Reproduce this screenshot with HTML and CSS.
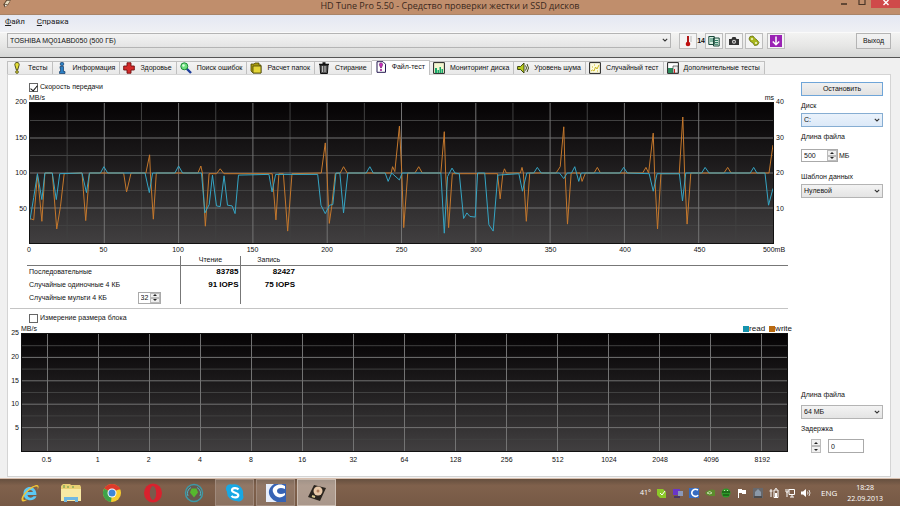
FILE: index.html
```html
<!DOCTYPE html>
<html lang="ru">
<head>
    <meta charset="UTF-8">
    <meta name="viewport" content="width=device-width, initial-scale=1.0">
    <title>HD Tune Pro 5.50</title>
    <link rel="stylesheet" href="styles.css">
</head>
<body>

    <header class="titlebar">
        <svg class="app-icon" viewBox="0 0 12 12"><path d="M1 6 5 0h6L8 6 3 10z" fill="#5b4630"/><path d="M3 5 6 1l4 0-3 5z" fill="#e8dcc0"/><path d="M3 6l3 1-2 2z" fill="#fff"/></svg>
        <h1>HD Tune Pro 5.50 - Средство проверки жестки и SSD дисков</h1>
        <div class="window-buttons">
            <button aria-label="Свернуть"><svg viewBox="0 0 8 8"><path d="M1 4h6" stroke="#4a3628" stroke-width="1.6"/></svg></button>
            <button aria-label="Развернуть"><svg viewBox="0 0 8 8"><path d="M1 0v4.500h6V0" fill="none" stroke="#4a3628" stroke-width="1.2"/></svg></button>
            <button class="close" aria-label="Закрыть"><svg viewBox="0 0 8 8"><path d="M1.500 0l5 5M6.500 0l-5 5" stroke="#fff" stroke-width="1.400"/></svg></button>
        </div>
    </header>

    <nav class="menubar">
        <a href="#"><u>Ф</u>айл</a>
        <a href="#"><u>С</u>правка</a>
    </nav>

    <div class="toolbar">
        <div class="select drive">
            <select aria-label="Накопитель"><option>TOSHIBA MQ01ABD050 (500 ГБ)</option></select>
            <svg viewBox="0 0 6 4"><path d="M.8.8 3 3 5.200.8" fill="none" stroke="#333" stroke-width="1.100"/></svg>
        </div>
        <div class="tools">
            <button aria-label="Температура"><svg viewBox="0 0 12 12"><path d="M5 1h2v6h-2z" fill="#b01818"/><circle cx="6" cy="9" r="2.300" fill="#c01010"/><path d="M8 2h2M8 4h2M8 6h2" stroke="#999" stroke-width=".6"/></svg></button>
            <span class="temp">14</span>
            <button aria-label="Копировать"><svg viewBox="0 0 12 12"><path d="M.8 1.500h5.500v8H.8zM5.500 3h5.700v8H5.500z" fill="#d9efe3" stroke="#1c4a3c"/><path d="M2 4h3M2 6h3M7 5.500h3M7 7.500h3M7 9.300h3" stroke="#2c7a60"/></svg></button>
            <button aria-label="Снимок"><svg viewBox="0 0 12 12"><path d="M1 4h2.500l1-2h3l1 2H11v6H1z" fill="#333"/><circle cx="6" cy="6.800" r="2" fill="#ddd"/><circle cx="6" cy="6.800" r="1" fill="#444"/></svg></button>
            <button aria-label="Параметры"><svg viewBox="0 0 12 12"><path d="M2 1.500l3-.5 1.500 2L9 5l2 2.500L9.500 10l-3 .5L5 8 2.500 6.500 1 4z" fill="#a9b81c" stroke="#5e6a08" stroke-width=".8"/><circle cx="4" cy="4" r="1" fill="#f4f4d0"/><circle cx="8" cy="8" r="1" fill="#f4f4d0"/></svg></button>
            <button class="save" aria-label="Сохранить"><svg viewBox="0 0 12 12"><path d="M0 0h12v12H0z" fill="#9a22b4"/><path d="M6 1.500v8M2.800 6.500 6 9.700l3.200-3.200" fill="none" stroke="#fff" stroke-width="1.500"/></svg></button>
        </div>
        <button class="exit">Выход</button>
    </div>

    <main>
        <div class="tabs" role="tablist">
            <button role="tab"><svg viewBox="0 0 10 12"><path d="M5 .5c2 0 2.500 1.500 2 3L5.600 8H4.400L3 3.500c-.5-1.500 0-3 2-3z" fill="#e6e03a" stroke="#3c3c10" stroke-width=".9"/><circle cx="5" cy="10" r="1.400" fill="#d8d030" stroke="#3c3c10" stroke-width=".7"/></svg>Тесты</button>
            <button role="tab"><svg viewBox="0 0 10 12"><circle cx="5" cy="2" r="1.800" fill="#2a7fc4" stroke="#123a66" stroke-width=".7"/><path d="M3 4.500h3.500v5H8V11.500H2.500v-2h1V6.500H3z" fill="#2a7fc4" stroke="#123a66" stroke-width=".7"/></svg>Информация</button>
            <button role="tab"><svg viewBox="0 0 12 12"><path d="M4 .8h4V4h3.300v4H8v3.200H4V8H.7V4H4z" fill="#d42a2a" stroke="#701010" stroke-width=".9"/></svg>Здоровье</button>
            <button role="tab"><svg viewBox="0 0 12 12"><path d="M6.500 6.500 11 11" stroke="#1c3c9c" stroke-width="2.400"/><circle cx="4.300" cy="4.300" r="3.500" fill="#6fe080" stroke="#1f8a3a"/><circle cx="3.500" cy="3.500" r="1.200" fill="#dfffe0"/></svg>Поиск ошибок</button>
            <button role="tab"><svg viewBox="0 0 12 12"><path d="M1 2h3l1-1h4v2h2v8H3L1 9z" fill="#a89a10" stroke="#4c4606" stroke-width=".8"/><path d="M3 4h8v7H3z" fill="#e4d638" stroke="#4c4606" stroke-width=".8"/></svg>Расчет папок</button>
            <button role="tab"><svg viewBox="0 0 12 12"><path d="M2 3h8l-.6 8.500H2.600z" fill="#555" stroke="#111"/><path d="M1 2.300h10M4.500 1h3" stroke="#111" stroke-width="1.300"/><path d="M4.500 4v6M7 4v6" stroke="#ccc" stroke-width=".9"/></svg>Стирание</button>
            <button role="tab" class="active" aria-selected="true"><svg viewBox="0 0 12 12"><path d="M2 .7h6l2.500 2.500v8.100H2z" fill="#fff" stroke="#251a50"/><path d="M6 2c1.500 0 1.800 1 1.500 2L6.300 7h-.6L4.500 4C4.200 3 4.500 2 6 2z" fill="#d030c0" stroke="#601060" stroke-width=".6"/><circle cx="6" cy="9" r="1.100" fill="#a02090"/></svg>Файл-тест</button>
            <button role="tab"><svg viewBox="0 0 12 12"><path d="M.6.6h10.800v10.800H.6z" fill="#f4f7d0" stroke="#222"/><path d="M2 11V6h2v5zM4.500 11V8h1.500v3zM6.500 11V5H8v6zM8.500 11V7H10v4z" fill="#18a868"/></svg>Мониторинг диска</button>
            <button role="tab"><svg viewBox="0 0 12 12"><path d="M.6 4.500h2.900L7 1v10L3.500 7.500H.6z" fill="#b9cc20" stroke="#2f3806" stroke-width=".9"/><path d="M8.500 3.500q2 2.500 0 5M10 2q3 4 0 8" fill="none" stroke="#2f3806" stroke-width=".9"/></svg>Уровень шума</button>
            <button role="tab"><svg viewBox="0 0 12 12"><path d="M.6.6h10.800v10.800H.6z" fill="#fdfbe0" stroke="#222"/><path d="M2 9l1.500-1L5 9l1.500-4L8 7l2-4" fill="none" stroke="#cbb820"/><path d="M3 5h1M5 3h1M8 9h1" stroke="#cbb820"/></svg>Случайный тест</button>
            <button role="tab"><svg viewBox="0 0 12 12"><path d="M.6.6h10.800v10.800H.6z" fill="#fff" stroke="#222"/><path d="M1 6h5v5H1z" fill="#2d8a5c"/><path d="M6 4h5v7H6z" fill="#eee" stroke="#444" stroke-width=".7"/><path d="M7.500 7v4" stroke="#c22"/></svg>Дополнительные тесты</button>
        </div>

        <section class="panel">
            <div class="row">
                <div class="content transfer">
                    <label class="check"><input type="checkbox" checked>Скорость передачи</label>
                    <div class="units"><span>MB/s</span><span>ms</span></div>
                    <div class="chart">
                        <div class="y-axis"><span>200</span><span>150</span><span>100</span><span>50</span><span></span></div>
                        <svg class="plot" viewBox="0 0 500 200" preserveAspectRatio="none">
                            <g class="minor"><path d="M25 0V200M75 0V200M125 0V200M175 0V200M225 0V200M275 0V200M325 0V200M375 0V200M425 0V200M475 0V200M0 25H500M0 75H500M0 125H500M0 175H500"/></g>
                            <g class="major"><path d="M50 0V200M100 0V200M150 0V200M200 0V200M250 0V200M300 0V200M350 0V200M400 0V200M450 0V200M0 50H500M0 100H500M0 150H500"/></g>
                            <polyline class="write" points="0,165 2.500,167 5,103 8,169 10,100 15,100 18,180 20.500,148 23,101 35,100 37.500,168 40,100 63,100 65,127 68,100 78,100 80.500,74 81,100 83,166 85,100 113,100 115,90 116,100 118,176 120.500,101 125.500,101 128,94 130.500,101 163,101 165.500,167 167.500,101 170.500,101 173.400,183 176.300,101 196,100 198.700,57 199.800,98 201.400,172 203,148 205.400,101 208.800,100 211,91 213.500,100 243,100 244,91 245.500,98 248.600,33 250.200,100 251.500,178 254.200,100 259,100 261.600,91 264,100 276.500,100 278.800,41 279.700,100 281.700,178 284.200,101 314.600,101 316.400,137 318.200,101 319.300,94 320.600,100 330,100 331.100,92 332,100 334,169 336.300,100 354,100 356.800,91 359.200,34 360.100,100 361.700,173 364.200,100 370.200,100 371.500,112 373.800,100 379.600,100 381.800,92 383.900,100 412.300,100 414.500,92 416.300,100 419.400,43 420.300,100 422.300,180 424.600,101 436.900,101 439.300,20 440.500,100 442.200,173 444.700,100 467,100 469.500,92 471.800,100 497.300,100 500,60"/>
                            <polyline class="read" points="0,167 2.500,135 5,101 8,138 10,100 15,100 17.700,138 20,101 35,100 38,128 40,100 47.400,100 49.700,91 52.300,100 77.400,100 80.300,128 82.500,100 97.500,100 100,90 102.700,100 115.400,100 117.700,157 120.600,145 122.800,103 125.500,147 128,148 130.600,104 132.900,146 136,147 138,158 140.300,103 160.800,102 162.900,127 165.300,102 193.600,102 195.800,146 198.700,158 201.600,146 203.800,145 205.900,100 208.500,100 211,157 213.900,100 226.200,100 228.700,91 231,100 239,100 241,112 243.400,100 248.600,110 250.400,100 276.500,100 278.800,186 281,105 284,93 286,100 288.900,101 291.800,165 294,157 296,162 299.600,163 301.200,100 306,100 308.800,174 311.700,183 314.800,103 329,101 331.400,126 334.300,100 339,100 341.400,92 344,100 356.300,100 359.200,108 361.500,100 364.400,100 366.600,91 369.300,112 371,100 397,100 399.500,92 402,100 416.700,101 419.400,126 422,101 437,101 439.100,140 441.300,100 452,100 454.300,92 457,100 484.700,100 487,92 489.200,100 494.600,100 497,146 500,122"/>
                        </svg>
                        <div class="y-axis right"><span>40</span><span>30</span><span>20</span><span>10</span><span></span></div>
                    </div>
                    <div class="x-axis ends"><span>0</span><span>50</span><span>100</span><span>150</span><span>200</span><span>250</span><span>300</span><span>350</span><span>400</span><span>450</span><span>500mB</span></div>

                    <table class="results">
                        <thead>
                            <tr><th></th><th>Чтение</th><th>Запись</th><th></th></tr>
                        </thead>
                        <tbody>
                            <tr><td>Последовательные</td><td>83785</td><td>82427</td><td></td></tr>
                            <tr><td>Случайные одиночные 4 КБ</td><td>91 IOPS</td><td>75 IOPS</td><td></td></tr>
                            <tr>
                                <td>
                                    <div class="multi">
                                        <label for="threads">Случайные мульти 4 КБ</label>
                                        <div class="spin threads"><input type="text" id="threads" value="32"><span class="arrows"><button aria-label="Больше"></button><button aria-label="Меньше"></button></span></div>
                                    </div>
                                </td>
                                <td></td><td></td><td></td>
                            </tr>
                        </tbody>
                    </table>
                </div>

                <aside>
                    <button class="stop">Остановить</button>
                    <label for="disk">Диск</label>
                    <div class="select blue">
                        <select id="disk"><option>C:</option></select>
                        <svg viewBox="0 0 6 4"><path d="M.8.8 3 3 5.200.8" fill="none" stroke="#333" stroke-width="1.100"/></svg>
                    </div>
                    <label for="length">Длина файла</label>
                    <div class="length">
                        <div class="spin"><input type="text" id="length" value="500"><span class="arrows"><button aria-label="Больше"></button><button aria-label="Меньше"></button></span></div>
                        <span>МБ</span>
                    </div>
                    <label for="pattern">Шаблон данных</label>
                    <div class="select">
                        <select id="pattern"><option>Нулевой</option></select>
                        <svg viewBox="0 0 6 4"><path d="M.8.8 3 3 5.200.8" fill="none" stroke="#333" stroke-width="1.100"/></svg>
                    </div>
                </aside>
            </div>

            <div class="row lower">
                <div class="content block">
                    <label class="check"><input type="checkbox">Измерение размера блока</label>
                    <div class="units">
                        <span>MB/s</span>
                        <span class="legend"><i class="key-read"></i>read<i class="key-write"></i>write</span>
                    </div>
                    <div class="chart">
                        <div class="y-axis"><span>25</span><span>20</span><span>15</span><span>10</span><span>5</span><span></span></div>
                        <svg class="plot" viewBox="0 0 300 100" preserveAspectRatio="none">
                            <g class="minor"><path d="M0 10H300M0 30H300M0 50H300M0 70H300M0 90H300"/></g>
                            <g class="major"><path d="M10 0V100M30 0V100M50 0V100M70 0V100M90 0V100M110 0V100M130 0V100M150 0V100M170 0V100M190 0V100M210 0V100M230 0V100M250 0V100M270 0V100M290 0V100M0 20H300M0 40H300M0 60H300M0 80H300"/></g>
                        </svg>
                    </div>
                    <div class="x-axis"><span>0.5</span><span>1</span><span>2</span><span>4</span><span>8</span><span>16</span><span>32</span><span>64</span><span>128</span><span>256</span><span>512</span><span>1024</span><span>2048</span><span>4096</span><span>8192</span></div>
                </div>

                <aside>
                    <label for="block-length">Длина файла</label>
                    <div class="select">
                        <select id="block-length"><option>64 МБ</option></select>
                        <svg viewBox="0 0 6 4"><path d="M.8.8 3 3 5.200.8" fill="none" stroke="#333" stroke-width="1.100"/></svg>
                    </div>
                    <label for="delay">Задержка</label>
                    <div class="delay">
                        <span class="arrows"><button aria-label="Больше"></button><button aria-label="Меньше"></button></span>
                        <input type="text" id="delay" value="0">
                    </div>
                </aside>
            </div>
        </section>
    </main>

    <footer class="taskbar">
        <div class="apps">
            <button aria-label="Internet Explorer"><svg viewBox="0 0 20 20"><path d="M16.500 12H7.500c.3 3 4.500 3.500 6 1.300h3C14.800 19 3.500 19 3.500 10.500S16.500 1.500 16.500 12zM7.600 9h5.300c-.3-2.700-5-2.700-5.300 0z" fill="#5cc8f4"/><path d="M2 18C-1 14 11 2 17 2c3 .5 1 4 .5 5 .5-2 .5-3.500-1-3.500C12 3.500 2 13 3.500 16.500c.8 1 3 0 4 0C6 17.500 3.500 19.500 2 18z" fill="#f4c534"/></svg></button>
            <button aria-label="Проводник"><svg viewBox="0 0 20 20"><path d="M0 3l2-2h7l1 1h9l1 2v14H0z" fill="#e9cf74"/><path d="M0 6h20v12H0z" fill="#f8e9a4"/><path d="M3 2v3M7 3v2M12 3v2" stroke="#5a9a4a"/><path d="M3 19v-5h14v5h-3v-2H6v2z" fill="#6fb8e2"/></svg></button>
            <button aria-label="Chrome"><svg viewBox="0 0 20 20"><circle cx="10" cy="10" r="9" fill="#f6cc30"/><path d="M10 10 2.200 5.500A9 9 0 0 1 17.800 5.500z" fill="#dc3a2c"/><path d="M10 10 2.200 5.500A9 9 0 0 0 9 19z" fill="#3fa24a"/><path d="M10 5.500h8" stroke="#dc3a2c" stroke-width="2"/><circle cx="10" cy="10" r="4.500" fill="#fff"/><circle cx="10" cy="10" r="3.500" fill="#3f86d8"/></svg></button>
            <button aria-label="Opera"><svg viewBox="0 0 20 20"><ellipse cx="10" cy="10" rx="9" ry="9.500" fill="#d8222e"/><ellipse cx="10" cy="10" rx="3.200" ry="7" fill="#7a5a4c"/></svg></button>
            <button aria-label="Загрузки"><svg viewBox="0 0 20 20"><circle cx="10" cy="10" r="8.500" fill="#66584e" stroke="#3d99a6" stroke-width="1.500"/><path d="M4 13A6.500 6.500 0 0 1 7 4.500M16 13A6.500 6.500 0 0 0 13 4.500" fill="none" stroke="#52b4c4"/><path d="M7.500 5.500h5l1.500 4-4 5-4-5z" fill="#56b82e"/></svg></button>
            <button class="open" aria-label="Skype"><svg viewBox="0 0 20 20"><path d="M1 5a4.500 4.500 0 0 1 6-3.500A9 9 0 0 1 18 12a4.500 4.500 0 0 1-6 6A9 9 0 0 1 2 8.500 4 4 0 0 1 1 5z" fill="#18a8e4"/><path d="M13.500 6.500C12 4.500 7 4.500 7 7.300c0 3 6.300 2 6.300 5 0 2.600-5 2.900-6.800.5" fill="none" stroke="#fff" stroke-width="2.200"/></svg></button>
            <button class="open" aria-label="CCleaner"><svg viewBox="0 0 20 20"><path d="M0 1h20v18H0z" fill="#3763b4"/><path d="M0 1h8C-1 7 3 16 11 19H0z" fill="#e7eefb"/><path d="M19 3C14-1 5 3 7 9s8 7 12 3v-2c-4 2-8 1-8-2s4-4 8-2z" fill="#fff"/></svg></button>
            <button class="open current" aria-label="HD Tune"><svg viewBox="0 0 20 20"><path d="M7 2l12 3-6 13L1 14z" fill="#2a241e"/><circle cx="11" cy="8" r="4.500" fill="#e8c8a8"/><circle cx="11" cy="8" r="1.500" fill="#b08060"/><path d="M5 13l3 1" stroke="#d8c890" stroke-width="2"/></svg></button>
        </div>
        <div class="tray">
            <span>41°</span>
            <svg viewBox="0 0 10 10"><path d="M0 1h6l3 3v6H3L0 7z" fill="#8cc828"/><path d="M3 5l2 2 3-4" fill="none" stroke="#fff"/></svg>
            <svg viewBox="0 0 10 10"><path d="M0 1h7v6H0z" fill="#6a35c8"/><path d="M5 3h5v5H5z" fill="#8a98b8"/><path d="M1 9h6" stroke="#3a2a70" stroke-width="1.500"/></svg>
            <svg viewBox="0 0 10 10"><path d="M0 0h10v10H0z" fill="#376cc0"/><path d="M9 2C5 0 2 3 3 6s5 3 6 1" fill="none" stroke="#fff" stroke-width="1.600"/></svg>
            <svg viewBox="0 0 10 10"><path d="M0 5q4-5 10-3v6H5q-3 0-5-3z" fill="#5c8c2c"/><path d="M2 5q3-3 5 0-2 2-5 0" fill="none" stroke="#c4d8a8"/></svg>
            <svg viewBox="0 0 10 10"><circle cx="5" cy="5" r="4.500" fill="#2d9a28"/><path d="M1 4h8M2 7h6" stroke="#12400f"/><path d="M3 2l1 1M7 2 6 3" stroke="#bfe8b0"/></svg>
            <svg viewBox="0 0 10 10"><path d="M1.500 1v9" stroke="#fff"/><path d="M2 1h3v1h4v4H5V5H2z" fill="#fff"/></svg>
            <svg viewBox="0 0 10 10"><path d="M0 0h10v10H0z" fill="#67686c"/><path d="M2 8V4l3-3 3 3v4z" fill="#8b99a8"/><path d="M1 9h8" stroke="#333"/></svg>
            <svg viewBox="0 0 10 10"><path d="M5 2h4v7.500H5zM6 .8h2" fill="none" stroke="#fff"/><path d="M6 5h2v4H6z" fill="#fff"/><path d="M2 1v8M.5 3h3" stroke="#fff"/></svg>
            <svg viewBox="0 0 10 10"><path d="M4 1.500h5.500v5H4zM5 9h4M7 7v2M1 1v3h2V1M2 4v5" fill="none" stroke="#fff"/></svg>
            <svg viewBox="0 0 10 10"><path d="M0 3.500h2L5 1v8L2 6.500H0z" fill="#fff"/><path d="M6.500 3.500q1 1.500 0 3M8 2q2 3 0 6" fill="none" stroke="#fff" stroke-width=".8"/></svg>
            <span class="lang">ENG</span>
            <time class="clock">18:28<br>22.09.2013</time>
        </div>
    </footer>

</body>
</html>
```
FILE: styles.css
```css
* {
    box-sizing: border-box;
}

body {
    margin: 0;
    min-height: 100vh;
    display: flex;
    flex-direction: column;
    background-color: #f0f0f0;
    color: #111;
    font-family: "Liberation Sans", Arial, sans-serif;
    font-size: 7px;
    line-height: 10px;
}

button,
input,
select {
    font: inherit;
    color: inherit;
    margin: 0;
    padding: 0;
    border-radius: 0;
}

svg {
    display: block;
    flex: none;
}

/* window frame */
.titlebar {
    display: flex;
    align-items: flex-start;
    height: 15px;
    padding-left: 2px;
    background-color: #c08e6c;
    border-bottom: 1px solid #a98468;
}

.app-icon {
    width: 10px;
    height: 9px;
}

.titlebar h1 {
    flex: 1;
    margin: 0;
    padding-left: 53px;
    font-family: "Open Sans", "Noto Sans", sans-serif;
    font-size: 9px;
    font-weight: normal;
    line-height: 11px;
    text-align: center;
    color: #3a281c;
}

.window-buttons {
    display: flex;
}

.window-buttons button {
    display: flex;
    justify-content: center;
    width: 18px;
    height: 8px;
    border: 0;
    background: none;
}

.window-buttons svg {
    width: 8px;
    height: 8px;
}

.window-buttons .close {
    width: 29px;
    background-color: #cf4a4a;
}

.menubar {
    display: flex;
    gap: 12px;
    height: 18px;
    padding: 2px 5px;
    background: linear-gradient(#e4e8f3, #eff0f4);
    border-bottom: 1px solid #fafafa;
    font-family: Roboto, "Open Sans", sans-serif;
    font-size: 8px;
}

.menubar a {
    color: #222;
    text-decoration: none;
}

.toolbar {
    display: flex;
    align-items: flex-start;
    height: 25px;
    padding: 0 9px 0 7px;
    background: linear-gradient(#f3f3f2, #e6e6e5 55%, #d6d7d6);
    border-bottom: 1px solid #555;
}

.select {
    position: relative;
}

.select select {
    display: block;
    width: 100%;
    height: 14px;
    padding: 0 2px;
    appearance: none;
    border: 1px solid #b4b4b4;
    background: linear-gradient(#f3f3f3, #e4e4e4);
}

.select svg {
    position: absolute;
    right: 3px;
    top: 5px;
    width: 6px;
    height: 4px;
    pointer-events: none;
}

.select.blue select {
    border-color: #86add2;
    background: linear-gradient(#eaf2fb, #dce9f8);
}

.drive {
    flex: 1;
}

.drive select {
    height: 15px;
}

.tools {
    display: flex;
    align-items: center;
    gap: 2px;
    margin-left: 8px;
}

.tools button {
    display: flex;
    align-items: center;
    justify-content: center;
    width: 18px;
    height: 16px;
    border: 1px solid #bdbdbd;
    background-color: #f4f4f4;
}

.tools svg {
    width: 12px;
    height: 12px;
}

.tools .save {
    margin-left: 2px;
}

.temp {
    margin: 0 -2px;
    font-weight: bold;
}

.exit {
    width: 35px;
    height: 16px;
    margin-left: 71px;
    border: 1px solid #b4b4b4;
    background: linear-gradient(#f2f2f2, #e8e8e8);
}

/* tabs */
main {
    flex: 1;
    display: flex;
    flex-direction: column;
    padding: 2px 9px 1px 7px;
    border-bottom: 1px solid #d8bfae;
}

.tabs {
    display: flex;
    align-items: flex-end;
    height: 14px;
}

.tabs button {
    display: flex;
    align-items: center;
    gap: 5px;
    height: 13px;
    padding: 0 4px 0 3px;
    border: 1px solid #c0c0c0;
    border-left: 0;
    border-bottom: 0;
    background: linear-gradient(#f4f4f4, #e8e8e8);
    white-space: nowrap;
}

.tabs button:first-child {
    border-left: 1px solid #c0c0c0;
}

.tabs svg {
    width: 12px;
    height: 12px;
}

.tabs .active {
    height: 15px;
    margin-bottom: -1px;
    padding-bottom: 3px;
    background: #fff;
    z-index: 1;
}

.panel {
    flex: 1;
    display: flex;
    flex-direction: column;
    border: 1px solid #d4d4d4;
    background-color: #fff;
}

.row {
    display: flex;
    padding: 7px 7px 0 2px;
}

.content {
    flex: 1;
    min-width: 0;
}

.check {
    display: flex;
    align-items: center;
    gap: 2px;
    height: 10px;
}

.check input {
    width: 9px;
    height: 9px;
    appearance: none;
    border: 1px solid #666;
    background-color: #fff;
}

.check input:checked::after {
    content: "";
    display: block;
    width: 3px;
    height: 6px;
    margin: 0 0 0 2px;
    border: solid #111;
    border-width: 0 1px 1px 0;
    transform: rotate(40deg);
}

/* charts */
.units {
    display: flex;
    justify-content: space-between;
    line-height: 8px;
}

.chart {
    display: flex;
}

.plot {
    flex: 1;
    min-width: 0;
    background: linear-gradient(#050304, #1b191a 40%, #413f40);
    border: 1px solid #111;
}

.plot path,
.plot polyline {
    fill: none;
    vector-effect: non-scaling-stroke;
}

.minor {
    stroke: #414141;
}

.major {
    stroke: #737373;
}

.read {
    stroke: #35a5c4;
}

.write {
    stroke: #c5782c;
}

.y-axis {
    display: flex;
    flex-direction: column;
    justify-content: space-between;
}

.y-axis span {
    display: flex;
    align-items: center;
    justify-content: flex-end;
    height: 0;
}

.y-axis.right span {
    justify-content: flex-start;
}

.x-axis {
    display: flex;
    justify-content: space-around;
}

.x-axis span {
    display: flex;
    justify-content: center;
    width: 0;
}

.x-axis.ends {
    justify-content: space-between;
}

.transfer .check,
.block .check {
    padding-left: 19px;
}

.transfer .units {
    padding: 2px 14px 0 19px;
}

.transfer .y-axis {
    width: 19px;
    padding-right: 2px;
}

.transfer .y-axis.right {
    width: 14px;
    padding: 0 0 0 2px;
}

.transfer .plot {
    height: 142px;
}

.transfer .x-axis {
    padding: 1px 14px 0 19px;
}

/* results table */
.results {
    width: calc(100% - 17px);
    margin: 1px 0 0 17px;
    border-collapse: collapse;
    table-layout: fixed;
}

.results th,
.results td {
    height: 13px;
    padding: 0 1px 0 2px;
}

.results th {
    height: 9px;
    border-bottom: 1px solid #777;
    font-weight: normal;
    line-height: 8px;
}

.results th:first-child {
    width: 153px;
}

.results th:nth-child(2),
.results th:nth-child(3) {
    width: 60px;
}

.results th:nth-child(-n+2),
.results td:nth-child(-n+2) {
    border-right: 1px solid #777;
}

.results td:nth-child(2),
.results td:nth-child(3) {
    font-size: 8px;
    font-weight: bold;
    text-align: right;
    color: #000;
}

.results th:nth-child(3),
.results td:nth-child(3) {
    padding-right: 5px;
}

.multi {
    display: flex;
    align-items: center;
    justify-content: space-between;
    padding-right: 18px;
}

.spin {
    display: flex;
    width: 37px;
    height: 13px;
    border: 1px solid #aaa;
    background-color: #fff;
}

.spin input {
    flex: 1;
    min-width: 0;
    padding-left: 2px;
    border: 0;
    background: none;
}

.threads {
    width: 23px;
    height: 12px;
}

.arrows {
    display: flex;
    flex-direction: column;
    width: 10px;
}

.arrows button {
    flex: 1;
    display: flex;
    align-items: center;
    justify-content: center;
    border: 1px solid #bbb;
    background-color: #f0f0f0;
}

.arrows button::before {
    content: "";
    border: 2px solid transparent;
    border-top: 0;
    border-bottom-color: #222;
}

.arrows button:last-child::before {
    border-top: 2px solid #222;
    border-bottom: 0;
}

/* side controls */
aside {
    width: 82px;
    margin-left: 13px;
    display: flex;
    flex-direction: column;
}

aside label {
    margin: 5px 0 2px;
}

.stop {
    height: 14px;
    border: 1px solid #6fa5d8;
    background: linear-gradient(#f0f0f0, #e2e2e2);
}

.length {
    display: flex;
    align-items: center;
    gap: 1px;
    margin: 5px 0;
}

/* block size */
.lower {
    flex: 1;
    padding-top: 4px;
}

.block {
    border-top: 1px solid #c4c4c4;
    padding-top: 4px;
}

.block .units {
    margin-top: 2px;
    padding-left: 11px;
}

.block .y-axis {
    width: 11px;
    padding-right: 2px;
}

.block .plot {
    height: 119px;
}

.block .x-axis {
    padding: 3px 0 0 11px;
}

.legend {
    display: flex;
    align-items: center;
    margin-right: -4px;
    font-size: 8px;
}

.legend i {
    width: 6px;
    height: 6px;
    margin-left: 4px;
}

.key-read {
    background-color: #1593ad;
}

.key-write {
    background-color: #b96a10;
}

.lower aside {
    padding-top: 77px;
}

.lower aside label {
    margin-bottom: 5px;
}

.delay {
    display: flex;
    gap: 7px;
    padding-left: 10px;
}

.delay input {
    width: 36px;
    height: 14px;
    padding-left: 2px;
    border: 1px solid #aaa;
    background-color: #fff;
}

/* taskbar */
.taskbar {
    display: flex;
    justify-content: space-between;
    height: 27px;
    padding: 0 17px 0 10px;
    background: linear-gradient(#66503f, #80614c 25%, #765945);
    color: #fff;
}

.apps {
    display: flex;
    gap: 2px;
}

.apps button {
    display: flex;
    align-items: center;
    justify-content: center;
    width: 39px;
    border: 1px solid transparent;
    background: none;
}

.apps svg {
    width: 20px;
    height: 20px;
}

.apps .open {
    border-color: #a08a7c;
    background-color: rgba(255, 255, 255, 0.15);
}

.apps .current {
    border-color: #cbbdb2;
    background-color: rgba(255, 255, 255, 0.38);
}

.tray {
    display: flex;
    align-items: center;
    gap: 6px;
    font-family: "Open Sans", "Noto Sans", sans-serif;
}

.tray svg {
    width: 10px;
    height: 10px;
}

.lang {
    padding: 0 4px;
    font-size: 8px;
}

.clock {
    text-align: center;
    line-height: 11px;
}
```
